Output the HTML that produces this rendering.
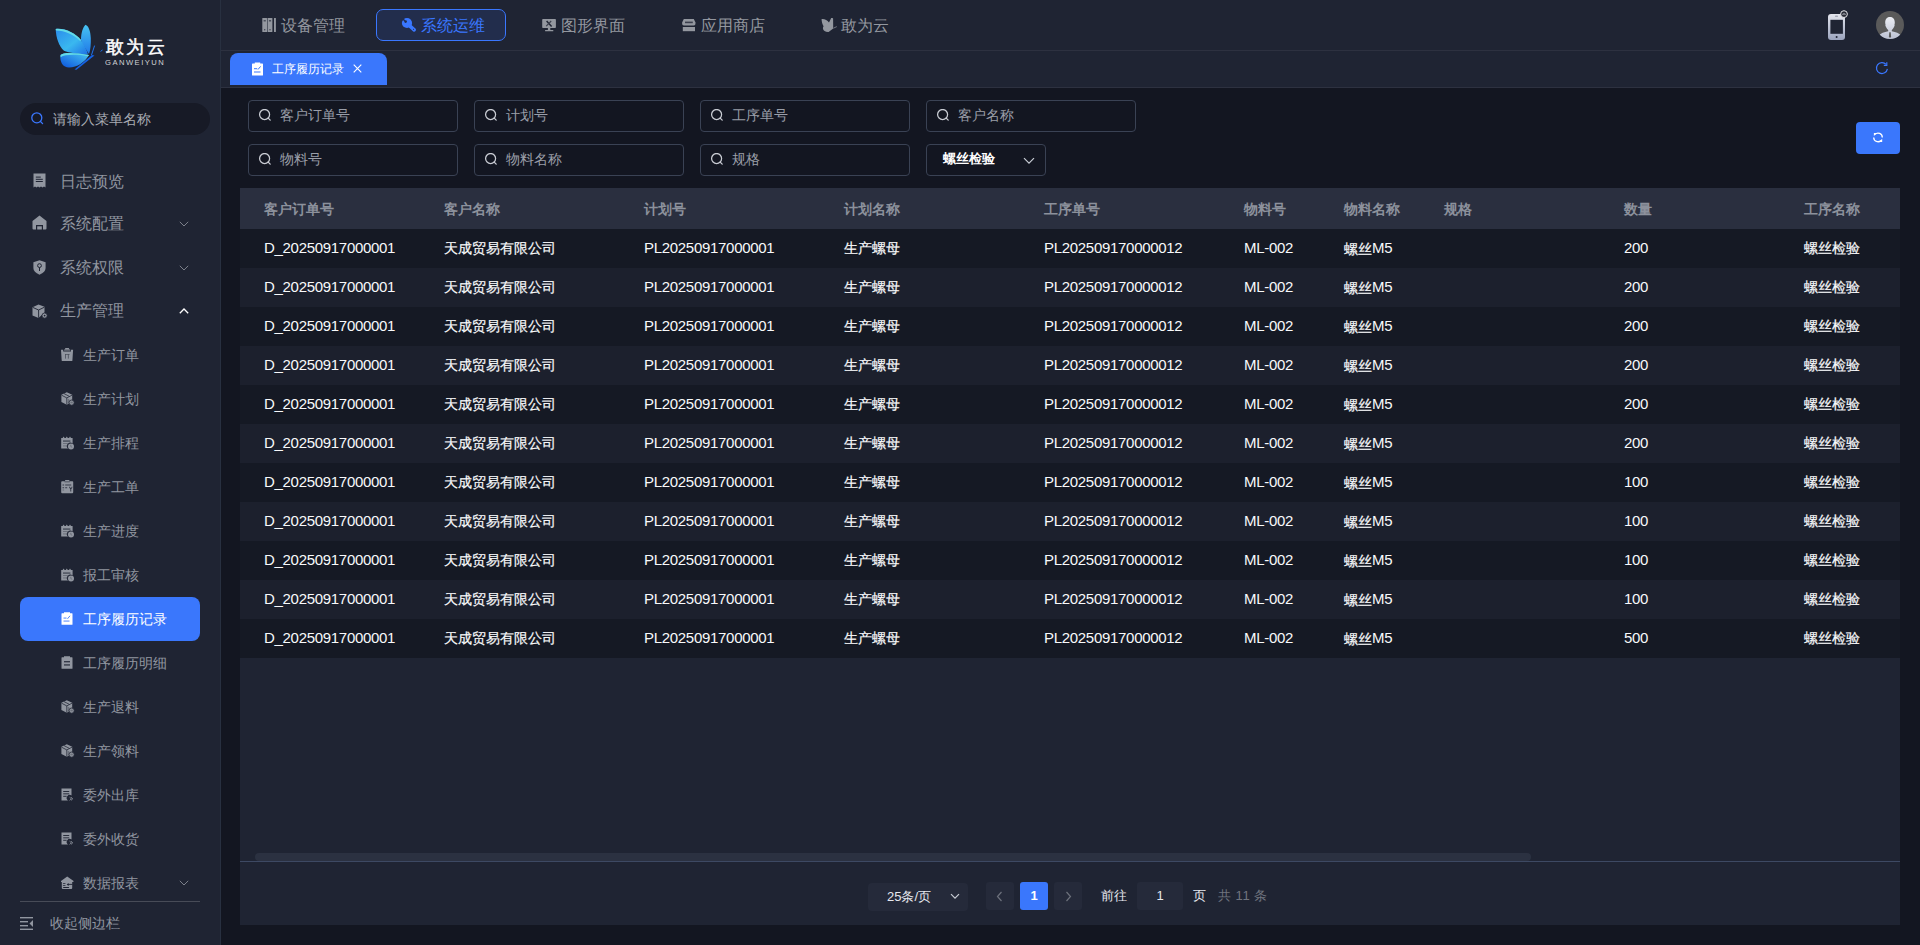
<!DOCTYPE html>
<html><head><meta charset="utf-8"><title>工序履历记录</title>
<style>
*{margin:0;padding:0;box-sizing:border-box}
html,body{width:1920px;height:945px;overflow:hidden}
body{background:#131621;font-family:"Liberation Sans",sans-serif;color:#e6e8ee;position:relative}
.abs{position:absolute}
#side{position:absolute;left:0;top:0;width:221px;height:945px;background:#1f2433;border-right:1px solid #283040}
#hdr{position:absolute;left:221px;top:0;width:1699px;height:51px;background:#1f2433;border-bottom:1px solid #2d3140}
#tabs{position:absolute;left:221px;top:51px;width:1699px;height:37px;background:#1f2433;border-bottom:1px solid #2d3140}
.nav{position:absolute;top:1px;height:50px;line-height:50px;font-size:16px;color:#a3a7b1;white-space:nowrap}
.nav svg{position:absolute}
.navact{position:absolute;left:155px;top:9px;width:130px;height:32px;border:1px solid #3a77ff;border-radius:7px;background:#222d4c}
.logo-t{position:absolute;left:106px;top:37px;font-size:18px;line-height:20px;font-weight:400;-webkit-text-stroke:0.45px #fff;color:#fff;letter-spacing:2.4px;white-space:nowrap}
.logo-s{position:absolute;left:105px;top:57.5px;font-size:7.6px;font-weight:normal;color:#d2d3d6;letter-spacing:1.5px;white-space:nowrap;transform:scaleY(0.95);transform-origin:0 0}
.msearch{position:absolute;left:20px;top:103px;width:190px;height:32px;border-radius:16px;background:#171a26}
.msearch span{position:absolute;left:33px;top:-0.5px;line-height:32px;font-size:14px;color:#a9acb4}
.mi{position:absolute;left:0;width:220px;height:44px;line-height:44px;color:#9196a0;white-space:nowrap}
.mi.top{font-size:16px}
.mi.sub{font-size:14px}
.mi svg{position:absolute}
.mi .txt{position:absolute}
.mi.top .txt{left:60px}
.mi.sub .txt{left:83px}
.mi.active{left:20px;width:180px;background:#3a77fc;border-radius:8px;color:#fff}
.mi.active .txt{left:63px}
.chev{position:absolute;left:179px}
.inp{position:absolute;width:210px;height:32px;border:1px solid #3a4254;border-radius:4px;background:#131621}
.inp span{position:absolute;left:31px;top:-1px;line-height:30px;font-size:14px;color:#9a9ea8}
.inp svg{position:absolute;left:9.5px;top:8px}
#tbl{position:absolute;left:240px;top:188px;width:1660px;height:737px;background:#1f2433;overflow:hidden}
.thead{position:absolute;left:0;top:0;width:1660px;height:41px;background:#2a2f3f}
.thead span{position:absolute;top:1px;line-height:41px;font-size:14px;font-weight:bold;color:#8c919c;white-space:nowrap}
.tr{position:absolute;left:0;width:1660px;height:39px}
.tr.odd{background:#151924}
.tr.even{background:#1c202d}
.tr span{position:absolute;top:0;line-height:39px;font-size:14px;color:#f8f9fb;white-space:nowrap}
.scroll{position:absolute;left:15px;top:665px;width:1276px;height:7.5px;border-radius:4px;background:#2b3141}
.pline{position:absolute;left:0;top:673px;width:1660px;height:1px;background:#3d4963}
.pg{position:absolute;font-size:13px;white-space:nowrap}

.lt{font-size:15px;letter-spacing:-0.3px}
.lt{font-weight:normal}
.lt{position:relative;top:-1px}
.tr span{-webkit-text-stroke:0.2px #f8f9fb}
.tr span .lt{-webkit-text-stroke:0}

</style></head><body>
<div id="side">
  <svg class="abs" style="left:55px;top:24px" width="50" height="47" viewBox="0 0 50 47">
    <defs>
      <linearGradient id="bw1" x1="0" y1="0" x2="1" y2="1"><stop offset="0" stop-color="#2a8cec"/><stop offset="0.55" stop-color="#3ab8ef"/><stop offset="1" stop-color="#1d6fe6"/></linearGradient>
      <linearGradient id="bw1b" x1="0" y1="0" x2="0" y2="1"><stop offset="0" stop-color="#47c3f3"/><stop offset="1" stop-color="#1f78e8"/></linearGradient>
      <linearGradient id="bw2" x1="0" y1="1" x2="1" y2="0"><stop offset="0" stop-color="#0b52dc"/><stop offset="1" stop-color="#48c6f2"/></linearGradient>
    </defs>
    <path d="M26 16 C26 9 28 3 30.6 0.8 C33.5 2 35.5 7 35.8 14 C36 20 35.5 26 34 30 C31 25 27 20 26 16Z" fill="url(#bw1b)"/>
    <path d="M0.7 4.9 C10 4 20 9 26 16 C29 21 32 26 33 30.5 C24 30 14 29 9 26.7 C4 22 1 14 0.7 4.9Z" fill="url(#bw1)"/>
    <path d="M0.7 4.9 C10 4 20 9 26 16 L25.2 17 C19 11 10 6.6 1 6.6Z" fill="#63dbe6"/>
    <path d="M5.5 31 C8 28 20 28.5 34 31 C30 38 22 43.5 14 43.5 C8 43.5 4.5 38 5.5 31Z" fill="url(#bw2)"/>
    <path d="M5.5 31 C8 28 20 28.5 34 31 L33 32.2 C22 30.2 10 30.2 5.6 33.2Z" fill="#63dbe6"/>
    <path d="M19.5 45.5 L37 31 L39.5 31.6 L21.5 45.8Z" fill="#1463e8"/>
    <path d="M36.5 31 L39.6 21.6" stroke="#1e73f0" stroke-width="1"/>
    <path d="M45.5 27.4 L47.5 26" stroke="#1e73f0" stroke-width="1"/>
  </svg>
  <div class="logo-t">敢为云</div>
  <div class="logo-s">GANWEIYUN</div>
  <div class="msearch">
    <svg class="abs" style="left:10.5px;top:9px" width="14" height="14" viewBox="0 0 14 14"><circle cx="5.8" cy="5.8" r="5" fill="none" stroke="#3a77ff" stroke-width="1.3"/><path d="M9.5 9.5 L11.6 11.6" stroke="#3a77ff" stroke-width="1.3" stroke-linecap="round"/></svg>
    <span>请输入菜单名称</span>
  </div>
  <div class="mi top" style="top:160px"><span style="position:absolute;left:33px;top:13px;line-height:0"><svg width="13" height="15" viewBox="0 0 13 15"><path d="M0.5 0.5 H12.5 V14.5 L11 13.4 L9.5 14.5 L8 13.4 L6.5 14.5 L5 13.4 L3.5 14.5 L2 13.4 L0.5 14.5Z" fill="#9196a0"/><rect x="2.8" y="3.6" width="5" height="1" fill="#1f2433"/><rect x="2.8" y="5.8" width="7" height="1" fill="#1f2433"/><rect x="2.8" y="8" width="7" height="1" fill="#1f2433"/></svg></span><span class="txt">日志预览</span></div>
  <div class="mi top" style="top:202px"><span style="position:absolute;left:32px;top:13px;line-height:0"><svg width="15" height="15" viewBox="0 0 15 15"><path d="M7.5 0.5 L14.5 6 L14.5 13.5 Q14.5 14.5 13.5 14.5 L11 14.5 L11 10 L4 10 L4 14.5 L1.5 14.5 Q0.5 14.5 0.5 13.5 L0.5 6Z" fill="#9196a0"/><rect x="5.2" y="11.3" width="4.6" height="3.2" fill="#9196a0"/></svg></span><span class="txt">系统配置</span><svg class="chev" style="top:19px" width="10" height="6" viewBox="0 0 10 6"><path d="M0.8 0.8 L5 5 L9.2 0.8" fill="none" stroke="#7c808b" stroke-width="1"/></svg></div>
  <div class="mi top" style="top:246px"><span style="position:absolute;left:33px;top:14px;line-height:0"><svg width="13" height="15" viewBox="0 0 13 15"><path d="M6.5 0.3 L12.6 2.3 L12.6 8 Q12.6 12 6.5 14.8 Q0.4 12 0.4 8 L0.4 2.3Z" fill="#9196a0"/><circle cx="6.5" cy="5.6" r="1.9" fill="none" stroke="#1f2433" stroke-width="1"/><path d="M6.5 7.5 L6.5 11" stroke="#1f2433" stroke-width="1"/></svg></span><span class="txt">系统权限</span><svg class="chev" style="top:19px" width="10" height="6" viewBox="0 0 10 6"><path d="M0.8 0.8 L5 5 L9.2 0.8" fill="none" stroke="#7c808b" stroke-width="1"/></svg></div>
  <div class="mi top" style="top:289px"><span style="position:absolute;left:32px;top:15px;line-height:0"><svg width="16" height="15" viewBox="0 0 16 15"><path d="M6.5 0.5 L12.5 2.8 L12.5 8.5 L6.5 14 L0.5 11.5 L0.5 3.2Z" fill="#9196a0"/><path d="M0.8 3.4 L6.6 6 L12.4 3.2 M6.6 6 L6.6 13.8" stroke="#1f2433" stroke-width="0.9" fill="none"/><circle cx="12.6" cy="11.6" r="2.6" fill="#9196a0" stroke="#1f2433" stroke-width="0.8"/><circle cx="12.6" cy="11.6" r="0.9" fill="#1f2433"/></svg></span><span class="txt">生产管理</span><svg class="chev" style="top:19px" width="10" height="6" viewBox="0 0 10 6"><path d="M0.8 5.2 L5 1 L9.2 5.2" fill="none" stroke="#ffffff" stroke-width="1.3"/></svg></div>
  <div class="mi sub" style="top:333px"><span style="position:absolute;left:61px;top:15px;line-height:0"><svg width="13" height="14" viewBox="0 0 13 14"><path d="M4.4 0 L7.8 0 L8.4 1.4 L3.8 1.4Z" fill="#9196a0"/><rect x="3" y="1.6" width="6.4" height="1" rx="0.4" fill="#9196a0"/><path d="M0 1.8 L2.2 1.8 L2.2 3.4 L10 3.4 L10 1.8 L12.1 1.8 L11.4 12.4 Q11.3 13 10.7 13 L1.4 13 Q0.8 13 0.7 12.4Z" fill="#9196a0"/><rect x="4" y="6" width="4.6" height="0.7" fill="#4a4f5b"/><rect x="4.1" y="6" width="0.8" height="4.6" fill="#4a4f5b"/><rect x="6.9" y="6" width="0.8" height="4.6" fill="#4a4f5b"/></svg></span><span class="txt">生产订单</span></div>
  <div class="mi sub" style="top:377px"><span style="position:absolute;left:61px;top:15px;line-height:0"><svg width="14" height="14" viewBox="0 0 14 14"><path d="M5.8 0.3 L11.2 2.8 L11.2 9.8 L5.8 12.8 L0.4 10 L0.4 2.8Z" fill="#9196a0"/><path d="M0.6 3.2 L5.8 5.9 L11 3.2 M5.8 5.9 L5.8 12.6 M3 1.6 L8.4 4.4" stroke="#1f2433" stroke-width="0.75" fill="none"/><rect x="6.6" y="7" width="1.6" height="4.6" fill="#6b707b"/><circle cx="10.6" cy="10.6" r="2.6" fill="#9196a0" stroke="#1f2433" stroke-width="0.8"/><rect x="9.4" y="9.6" width="2.4" height="1.8" fill="#6b707b"/></svg></span><span class="txt">生产计划</span></div>
  <div class="mi sub" style="top:421px"><span style="position:absolute;left:61px;top:15px;line-height:0"><svg width="14" height="14" viewBox="0 0 14 14"><path d="M0.2 2 L1.6 2 L2.6 0.4 L3.6 2 L4.8 2 L5.8 0.4 L6.8 2 L8 2 L9 0.4 L10 2 L11.6 2 L11.6 7.6 A3.3 3.3 0 0 0 7 12.6 L0.2 12.6Z" fill="#9196a0"/><rect x="2" y="4.6" width="7.4" height="0.9" fill="#1f2433"/><rect x="2" y="7" width="5.2" height="0.7" fill="#5b606c"/><rect x="2" y="9.6" width="4.4" height="0.7" fill="#5b606c"/><circle cx="10" cy="10.4" r="3" fill="#9196a0"/><path d="M9.8 8.8 L9.8 10.5 L11.2 11.4" stroke="#5b606c" stroke-width="0.7" fill="none"/></svg></span><span class="txt">生产排程</span></div>
  <div class="mi sub" style="top:465px"><span style="position:absolute;left:61px;top:15px;line-height:0"><svg width="13" height="14" viewBox="0 0 13 14"><rect x="0.2" y="1.2" width="12" height="12" rx="0.9" fill="#9196a0"/><rect x="4" y="0" width="4.4" height="2" rx="0.5" fill="#9196a0"/><rect x="3.6" y="1.6" width="5.2" height="0.6" fill="#1f2433"/><rect x="1.5" y="4.6" width="1.6" height="0.8" fill="#1f2433"/><rect x="4.2" y="4.6" width="6" height="0.8" fill="#1f2433"/><rect x="1.5" y="7.4" width="1.6" height="0.8" fill="#1f2433"/><rect x="4.2" y="7.4" width="2" height="0.8" fill="#1f2433"/><rect x="1.5" y="9.6" width="1.6" height="0.8" fill="#5b606c"/><path d="M8.2 6.8 Q8.3 8.6 9.4 8.8 L9.4 11.4 L10.2 11.4 L10.2 8.8 Q11.3 8.6 11.4 6.8 L10.6 6.8 L10.6 7.8 L9 7.8 L9 6.8Z" fill="#1f2433"/></svg></span><span class="txt">生产工单</span></div>
  <div class="mi sub" style="top:509px"><span style="position:absolute;left:61px;top:15px;line-height:0"><svg width="14" height="14" viewBox="0 0 14 14"><path d="M0.2 2 L1.6 2 L2.6 0.4 L3.6 2 L4.8 2 L5.8 0.4 L6.8 2 L8 2 L9 0.4 L10 2 L11.6 2 L11.6 7.6 A3.3 3.3 0 0 0 7 12.6 L0.2 12.6Z" fill="#9196a0"/><rect x="2" y="4.6" width="7.4" height="0.9" fill="#1f2433"/><rect x="2" y="7" width="5.2" height="0.7" fill="#5b606c"/><rect x="2" y="9.6" width="4.4" height="0.7" fill="#5b606c"/><circle cx="10" cy="10.4" r="3" fill="#9196a0"/><path d="M9.8 8.8 L9.8 10.5 L11.2 11.4" stroke="#5b606c" stroke-width="0.7" fill="none"/></svg></span><span class="txt">生产进度</span></div>
  <div class="mi sub" style="top:553px"><span style="position:absolute;left:61px;top:15px;line-height:0"><svg width="14" height="14" viewBox="0 0 14 14"><path d="M0.2 2 L1.6 2 L2.6 0.4 L3.6 2 L4.8 2 L5.8 0.4 L6.8 2 L8 2 L9 0.4 L10 2 L11.6 2 L11.6 7.6 A3.3 3.3 0 0 0 7 12.6 L0.2 12.6Z" fill="#9196a0"/><rect x="2" y="4.6" width="7.4" height="0.9" fill="#1f2433"/><rect x="2" y="7" width="5.2" height="0.7" fill="#5b606c"/><rect x="2" y="9.6" width="4.4" height="0.7" fill="#5b606c"/><circle cx="10" cy="10.4" r="3" fill="#9196a0"/><path d="M9.8 8.8 L9.8 10.5 L11.2 11.4" stroke="#5b606c" stroke-width="0.7" fill="none"/></svg></span><span class="txt">报工审核</span></div>
  <div class="mi sub active" style="top:597px"><span style="position:absolute;left:41px;top:15px;line-height:0"><svg width="12" height="13" viewBox="0 0 12 13"><path d="M0.5 1.8 Q0.5 1.3 1 1.3 L3 1.3 L3 0.3 L9 0.3 L9 1.3 L11 1.3 Q11.5 1.3 11.5 1.8 L11.5 12.3 Q11.5 12.8 11 12.8 L1 12.8 Q0.5 12.8 0.5 12.3Z" fill="#fff"/><rect x="2.5" y="5.6" width="3" height="0.9" fill="#3a77fc"/><rect x="2.5" y="8.6" width="6" height="0.9" fill="#3a77fc"/><path d="M6.5 6.8 L9 3.8" stroke="#3a77fc" stroke-width="0.9"/></svg></span><span class="txt">工序履历记录</span></div>
  <div class="mi sub" style="top:641px"><span style="position:absolute;left:61px;top:15px;line-height:0"><svg width="12" height="13" viewBox="0 0 12 13"><path d="M0.5 1.8 Q0.5 1.3 1 1.3 L3 1.3 L3 0.3 L9 0.3 L9 1.3 L11 1.3 Q11.5 1.3 11.5 1.8 L11.5 12.3 Q11.5 12.8 11 12.8 L1 12.8 Q0.5 12.8 0.5 12.3Z" fill="#9196a0"/><rect x="3" y="5.2" width="6" height="1.1" fill="#1f2433"/><rect x="3" y="8.4" width="6" height="1.1" fill="#1f2433"/></svg></span><span class="txt">工序履历明细</span></div>
  <div class="mi sub" style="top:685px"><span style="position:absolute;left:61px;top:15px;line-height:0"><svg width="14" height="14" viewBox="0 0 14 14"><path d="M5.8 0.3 L11.2 2.8 L11.2 9.8 L5.8 12.8 L0.4 10 L0.4 2.8Z" fill="#9196a0"/><path d="M0.6 3.2 L5.8 5.9 L11 3.2 M5.8 5.9 L5.8 12.6 M3 1.6 L8.4 4.4" stroke="#1f2433" stroke-width="0.75" fill="none"/><rect x="6.6" y="7" width="1.6" height="4.6" fill="#6b707b"/><circle cx="10.6" cy="10.6" r="2.6" fill="#9196a0" stroke="#1f2433" stroke-width="0.8"/><rect x="9.4" y="9.6" width="2.4" height="1.8" fill="#6b707b"/></svg></span><span class="txt">生产退料</span></div>
  <div class="mi sub" style="top:729px"><span style="position:absolute;left:61px;top:15px;line-height:0"><svg width="14" height="14" viewBox="0 0 14 14"><path d="M5.8 0.3 L11.2 2.8 L11.2 9.8 L5.8 12.8 L0.4 10 L0.4 2.8Z" fill="#9196a0"/><path d="M0.6 3.2 L5.8 5.9 L11 3.2 M5.8 5.9 L5.8 12.6 M3 1.6 L8.4 4.4" stroke="#1f2433" stroke-width="0.75" fill="none"/><rect x="6.6" y="7" width="1.6" height="4.6" fill="#6b707b"/><circle cx="10.6" cy="10.6" r="2.6" fill="#9196a0" stroke="#1f2433" stroke-width="0.8"/><rect x="9.4" y="9.6" width="2.4" height="1.8" fill="#6b707b"/></svg></span><span class="txt">生产领料</span></div>
  <div class="mi sub" style="top:773px"><span style="position:absolute;left:61px;top:15px;line-height:0"><svg width="12" height="13" viewBox="0 0 12 13"><path d="M0.5 0.5 H10.5 V7.5 A3 3 0 0 0 7 12.5 H0.5Z" fill="#9196a0"/><rect x="2.2" y="3" width="6" height="0.9" fill="#1f2433"/><rect x="2.2" y="5.4" width="6" height="0.9" fill="#1f2433"/><rect x="2.2" y="7.8" width="3.5" height="0.9" fill="#1f2433"/><path d="M8.6 9.2 L10.4 10.8 L8.6 12.4 M10 9.2 L11.8 10.8 L10 12.4" stroke="#9196a0" stroke-width="0.8" fill="none"/></svg></span><span class="txt">委外出库</span></div>
  <div class="mi sub" style="top:817px"><span style="position:absolute;left:61px;top:15px;line-height:0"><svg width="12" height="13" viewBox="0 0 12 13"><path d="M0.5 0.5 H10.5 V7.5 A3 3 0 0 0 7 12.5 H0.5Z" fill="#9196a0"/><rect x="2.2" y="3" width="6" height="0.9" fill="#1f2433"/><rect x="2.2" y="5.4" width="6" height="0.9" fill="#1f2433"/><rect x="2.2" y="7.8" width="3.5" height="0.9" fill="#1f2433"/><path d="M8.6 9.2 L10.4 10.8 L8.6 12.4 M10 9.2 L11.8 10.8 L10 12.4" stroke="#9196a0" stroke-width="0.8" fill="none"/></svg></span><span class="txt">委外收货</span></div>
  <div class="mi sub" style="top:861px"><span style="position:absolute;left:61px;top:15px;line-height:0"><svg width="14" height="14" viewBox="0 0 14 14"><path d="M6.2 0.4 L12.6 5 Q12.8 6 12 6 L11.2 6 L11.2 12 Q11.2 13 10.2 13 L1.8 13 Q0.8 13 0.8 12 L0.8 6 L0.2 6 Q-0.4 6 0 5Z" fill="#9196a0"/><rect x="1.8" y="6.9" width="2.8" height="0.8" rx="0.4" fill="#1f2433"/><rect x="1.8" y="9" width="2.8" height="0.8" rx="0.4" fill="#1f2433"/><rect x="2" y="11" width="6.2" height="0.9" rx="0.45" fill="#1f2433"/><path d="M7 8.4 L11.6 8.4" stroke="#1f2433" stroke-width="0.9"/><path d="M5.7 8.4 L7.6 6.9 L7.6 9.9Z" fill="#1f2433"/></svg></span><span class="txt">数据报表</span><svg class="chev" style="top:19px" width="10" height="6" viewBox="0 0 10 6"><path d="M0.8 0.8 L5 5 L9.2 0.8" fill="none" stroke="#7c808b" stroke-width="1"/></svg></div>
  <div class="abs" style="left:20px;top:901px;width:180px;height:1px;background:#474b57"></div>
  <svg class="abs" style="left:20px;top:917px" width="14" height="13" viewBox="0 0 14 13" fill="#9196a0"><rect x="0" y="0" width="13" height="1.4"/><rect x="0" y="4" width="8" height="1.4"/><rect x="0" y="8" width="8" height="1.4"/><rect x="0" y="11.6" width="13" height="1.4"/><path d="M13 3 L9.5 6.5 L13 10 Z"/></svg>
  <div class="abs" style="left:50px;top:913px;font-size:14px;line-height:20px;color:#9196a0">收起侧边栏</div>
</div>

<div id="hdr">
  <div class="navact"></div>
  <span class="abs" style="left:41px;top:18px;line-height:0"><svg width="15" height="14" viewBox="0 0 15 14"><rect x="0.3" y="0" width="4.8" height="14" rx="0.6" fill="#93979f"/><rect x="5.6" y="0" width="4.8" height="14" rx="0.6" fill="#93979f"/><rect x="12" y="0" width="1.9" height="14" rx="0.3" fill="#93979f"/><rect x="1.6" y="2.2" width="2.2" height="1.2" fill="#3b3f4d"/><rect x="6.9" y="2.2" width="2.2" height="1.2" fill="#3b3f4d"/><circle cx="2.7" cy="11.8" r="0.7" fill="#3b3f4d"/><circle cx="8" cy="11.8" r="0.7" fill="#3b3f4d"/></svg></span><span class="nav" style="left:60px;color:#93979f">设备管理</span>
  <span class="abs" style="left:180px;top:17px;line-height:0"><svg width="16" height="16" viewBox="0 0 16 16"><circle cx="6" cy="6" r="5.1" fill="#3a77ff"/><path d="M4.9 4.9 L0.3 2.2 L2.2 0.3Z" fill="#222d4c"/><circle cx="4.6" cy="4.6" r="1.3" fill="#222d4c"/><path d="M9.3 9.3 L13.2 12.8" stroke="#3a77ff" stroke-width="3.6" stroke-linecap="round"/><circle cx="12.5" cy="12.2" r="0.55" fill="#222d4c"/></svg></span><span class="nav" style="left:200px;color:#3a77ff">系统运维</span>
  <span class="abs" style="left:321px;top:18px;line-height:0"><svg width="15" height="15" viewBox="0 0 15 15"><rect x="0.2" y="0.9" width="13.7" height="9.2" rx="0.8" fill="#93979f"/><rect x="5.9" y="10" width="2.4" height="2.2" fill="#93979f"/><rect x="3" y="12.1" width="8.4" height="1.1" rx="0.5" fill="#93979f"/><path d="M4.6 3 L9.6 8.4" stroke="#1f2433" stroke-width="1.5"/><path d="M9.2 3 L4.2 8.2" stroke="#3b3f4d" stroke-width="1.1"/></svg></span><span class="nav" style="left:340px;color:#93979f">图形界面</span>
  <span class="abs" style="left:461px;top:18px;line-height:0"><svg width="15" height="15" viewBox="0 0 15 15"><path d="M1.8 0.9 H11.8 L13.6 4.8 Q13.6 7.6 11.8 7.6 H1.8 Q0 7.6 0 4.8Z" fill="#93979f"/><rect x="3" y="3.6" width="7.8" height="1.6" fill="#3b3f4d"/><rect x="0.8" y="9" width="12.2" height="4.2" fill="#93979f"/></svg></span><span class="nav" style="left:480px;color:#93979f">应用商店</span>
  <span class="abs" style="left:600px;top:17px;line-height:0"><svg width="17" height="16" viewBox="0 0 17 16"><path d="M0.6 2 C3.5 1.6 6.2 3 8 5.6 L10.2 1 C10.8 0.9 11.6 1 12.1 1.4 L12.2 11.6 L7.6 15 C4.6 15.2 2.2 13.8 2 11.8 C1.8 10.4 2.2 9.6 2.6 9.2 C1.2 7.2 0.6 4.4 0.6 2Z" fill="#93979f"/><path d="M12.4 11.2 L15.8 9.6" stroke="#93979f" stroke-width="0.7"/></svg></span><span class="nav" style="left:620px;color:#93979f">敢为云</span>
  <!-- phone -->
  <svg class="abs" style="left:1605px;top:9px" width="24" height="32" viewBox="0 0 24 32">
    <defs><linearGradient id="ph" x1="0" y1="0" x2="0" y2="1"><stop offset="0" stop-color="#e4e6ee"/><stop offset="1" stop-color="#9aa3bd"/></linearGradient></defs>
    <rect x="2" y="5" width="17" height="26" rx="3" fill="url(#ph)"/>
    <rect x="4.4" y="10.8" width="12.5" height="14" fill="#1f2433"/>
    <circle cx="10.6" cy="27.9" r="1" fill="#1f2433"/>
    <rect x="9" y="6.8" width="3" height="0.8" rx="0.4" fill="#6a7080"/>
    <circle cx="18" cy="5.1" r="3.4" fill="#2a2d38" stroke="#e6e6ea" stroke-width="1"/>
    <path d="M16.1 5.2 Q18 3.3 19.9 5.2 Q18 7 16.1 5.2Z" fill="#c9cbd2"/><circle cx="18" cy="5.2" r="0.7" fill="#2a2d38"/>
  </svg>
  <!-- avatar -->
  <svg class="abs" style="left:1654px;top:11px" width="30" height="30" viewBox="0 0 30 30">
    <defs><linearGradient id="av" x1="0" y1="0" x2="0" y2="1"><stop offset="0" stop-color="#eceef4"/><stop offset="1" stop-color="#b7bdd0"/></linearGradient>
    <clipPath id="avc"><circle cx="15" cy="14" r="14"/></clipPath></defs>
    <circle cx="15" cy="14" r="14" fill="#5a5a5a"/>
    <g clip-path="url(#avc)">
      <path d="M15 6 C11.5 6 10.2 8.5 10.2 11.5 C10.2 12.5 10.4 13.5 10.6 14 C10.2 14.2 10.3 15.2 10.8 15.6 C11.5 17.5 12.6 18.5 13.2 19 L13.2 20.3 C9 21 6 22.5 3.8 24.5 L3.8 30 L26.2 30 L26.2 24.5 C24 22.5 21 21 16.8 20.3 L16.8 19 C17.4 18.5 18.5 17.5 19.2 15.6 C19.7 15.2 19.8 14.2 19.4 14 C19.6 13.5 19.8 12.5 19.8 11.5 C19.8 8.5 18.5 6 15 6Z" fill="url(#av)"/>
      <path d="M14.3 21.2 L15.7 21.2 L16.1 25.8 L15 27 L13.9 25.8Z" fill="#5a5a5a"/>
    </g>
  </svg>
</div>

<div id="tabs">
  <div class="abs" style="left:9px;top:2px;width:157px;height:32px;background:#3a77fc;border-radius:8px 8px 0 0"></div>
  <svg class="abs" style="left:30px;top:11px" width="13" height="14" viewBox="0 0 13 14"><path d="M1 2.2 Q1 1.6 1.6 1.6 L3.8 1.6 L3.8 0.6 L9.2 0.6 L9.2 1.6 L11.4 1.6 Q12 1.6 12 2.2 L12 13 Q12 13.6 11.4 13.6 L1.6 13.6 Q1 13.6 1 13 Z" fill="#fff"/><rect x="3" y="6.2" width="3.2" height="1" fill="#3a77fc"/><rect x="3" y="9.5" width="6.5" height="1" fill="#3a77fc"/><path d="M7 7.5 L9.6 4.4" stroke="#3a77fc" stroke-width="1"/></svg>
  <div class="abs" style="left:51px;top:0;line-height:36px;font-size:12px;color:#fff">工序履历记录</div>
  <svg class="abs" style="left:132px;top:13px" width="9" height="9" viewBox="0 0 9 9"><path d="M0.7 0.7 L8.3 8.3 M8.3 0.7 L0.7 8.3" stroke="#fff" stroke-width="1.1"/></svg>
  <svg class="abs" style="left:1654px;top:10px" width="14" height="14" viewBox="0 0 14 14"><path d="M11.1 3.4 A5.5 5.5 0 1 0 12.4 7.9" fill="none" stroke="#3a77ff" stroke-width="1.2"/><path d="M11.8 1.2 L11.8 4.4 L8.8 4.4" fill="none" stroke="#3a77ff" stroke-width="1.2"/></svg>
</div>

<div class="inp" style="left:248px;top:100px"><svg width="14" height="14" viewBox="0 0 14 14"><circle cx="5.6" cy="5.5" r="5" fill="none" stroke="#c9ccd3" stroke-width="1.25"/><path d="M9.2 9.1 L11.2 11.1" stroke="#c9ccd3" stroke-width="1.3" stroke-linecap="round"/></svg><span>客户订单号</span></div>
<div class="inp" style="left:474px;top:100px"><svg width="14" height="14" viewBox="0 0 14 14"><circle cx="5.6" cy="5.5" r="5" fill="none" stroke="#c9ccd3" stroke-width="1.25"/><path d="M9.2 9.1 L11.2 11.1" stroke="#c9ccd3" stroke-width="1.3" stroke-linecap="round"/></svg><span>计划号</span></div>
<div class="inp" style="left:700px;top:100px"><svg width="14" height="14" viewBox="0 0 14 14"><circle cx="5.6" cy="5.5" r="5" fill="none" stroke="#c9ccd3" stroke-width="1.25"/><path d="M9.2 9.1 L11.2 11.1" stroke="#c9ccd3" stroke-width="1.3" stroke-linecap="round"/></svg><span>工序单号</span></div>
<div class="inp" style="left:926px;top:100px"><svg width="14" height="14" viewBox="0 0 14 14"><circle cx="5.6" cy="5.5" r="5" fill="none" stroke="#c9ccd3" stroke-width="1.25"/><path d="M9.2 9.1 L11.2 11.1" stroke="#c9ccd3" stroke-width="1.3" stroke-linecap="round"/></svg><span>客户名称</span></div>
<div class="inp" style="left:248px;top:144px"><svg width="14" height="14" viewBox="0 0 14 14"><circle cx="5.6" cy="5.5" r="5" fill="none" stroke="#c9ccd3" stroke-width="1.25"/><path d="M9.2 9.1 L11.2 11.1" stroke="#c9ccd3" stroke-width="1.3" stroke-linecap="round"/></svg><span>物料号</span></div>
<div class="inp" style="left:474px;top:144px"><svg width="14" height="14" viewBox="0 0 14 14"><circle cx="5.6" cy="5.5" r="5" fill="none" stroke="#c9ccd3" stroke-width="1.25"/><path d="M9.2 9.1 L11.2 11.1" stroke="#c9ccd3" stroke-width="1.3" stroke-linecap="round"/></svg><span>物料名称</span></div>
<div class="inp" style="left:700px;top:144px"><svg width="14" height="14" viewBox="0 0 14 14"><circle cx="5.6" cy="5.5" r="5" fill="none" stroke="#c9ccd3" stroke-width="1.25"/><path d="M9.2 9.1 L11.2 11.1" stroke="#c9ccd3" stroke-width="1.3" stroke-linecap="round"/></svg><span>规格</span></div>
<div class="inp" style="left:926px;top:144px;width:120px"><span style="left:16px;color:#fff;font-weight:bold;font-size:13px">螺丝检验</span><svg style="position:absolute;left:96px;top:12px" width="12" height="8" viewBox="0 0 12 8"><path d="M1 1.2 L6 6.2 L11 1.2" fill="none" stroke="#c8ccd4" stroke-width="1.2"/></svg></div>

<div class="abs" style="left:1856px;top:122px;width:44px;height:32px;background:#3a77fc;border-radius:4px">
  <svg class="abs" style="left:16px;top:9px" width="12" height="12" viewBox="0 0 12 12"><path d="M2.96 3.36 A4.3 4.3 0 0 1 10.3 6.4" fill="none" stroke="#fff" stroke-width="1.3"/><path d="M1.7 6.4 A4.3 4.3 0 0 0 9.04 9.44" fill="none" stroke="#fff" stroke-width="1.3"/><path d="M1.9 1.9 L5.1 1.9 L1.9 5.1Z" fill="#fff"/><path d="M10.2 10.9 L7 10.9 L10.2 7.7Z" fill="#fff"/></svg>
</div>

<div id="tbl">
<div class="thead"><span style="left:24px">客户订单号</span><span style="left:204px">客户名称</span><span style="left:404px">计划号</span><span style="left:604px">计划名称</span><span style="left:804px">工序单号</span><span style="left:1004px">物料号</span><span style="left:1104px">物料名称</span><span style="left:1204px">规格</span><span style="left:1384px">数量</span><span style="left:1564px">工序名称</span></div>
<div class="tr odd" style="top:41px"><span class="c0" style="left:24px"><b class=lt>D_20250917000001</b></span><span class="c1" style="left:204px">天成贸易有限公司</span><span class="c2" style="left:404px"><b class=lt>PL20250917000001</b></span><span class="c3" style="left:604px">生产螺母</span><span class="c4" style="left:804px"><b class=lt>PL202509170000012</b></span><span class="c5" style="left:1004px"><b class=lt>ML-002</b></span><span class="c6" style="left:1104px">螺丝<b class=lt>M5</b></span><span class="c8" style="left:1384px"><b class=lt>200</b></span><span class="c9" style="left:1564px">螺丝检验</span></div>
<div class="tr even" style="top:80px"><span class="c0" style="left:24px"><b class=lt>D_20250917000001</b></span><span class="c1" style="left:204px">天成贸易有限公司</span><span class="c2" style="left:404px"><b class=lt>PL20250917000001</b></span><span class="c3" style="left:604px">生产螺母</span><span class="c4" style="left:804px"><b class=lt>PL202509170000012</b></span><span class="c5" style="left:1004px"><b class=lt>ML-002</b></span><span class="c6" style="left:1104px">螺丝<b class=lt>M5</b></span><span class="c8" style="left:1384px"><b class=lt>200</b></span><span class="c9" style="left:1564px">螺丝检验</span></div>
<div class="tr odd" style="top:119px"><span class="c0" style="left:24px"><b class=lt>D_20250917000001</b></span><span class="c1" style="left:204px">天成贸易有限公司</span><span class="c2" style="left:404px"><b class=lt>PL20250917000001</b></span><span class="c3" style="left:604px">生产螺母</span><span class="c4" style="left:804px"><b class=lt>PL202509170000012</b></span><span class="c5" style="left:1004px"><b class=lt>ML-002</b></span><span class="c6" style="left:1104px">螺丝<b class=lt>M5</b></span><span class="c8" style="left:1384px"><b class=lt>200</b></span><span class="c9" style="left:1564px">螺丝检验</span></div>
<div class="tr even" style="top:158px"><span class="c0" style="left:24px"><b class=lt>D_20250917000001</b></span><span class="c1" style="left:204px">天成贸易有限公司</span><span class="c2" style="left:404px"><b class=lt>PL20250917000001</b></span><span class="c3" style="left:604px">生产螺母</span><span class="c4" style="left:804px"><b class=lt>PL202509170000012</b></span><span class="c5" style="left:1004px"><b class=lt>ML-002</b></span><span class="c6" style="left:1104px">螺丝<b class=lt>M5</b></span><span class="c8" style="left:1384px"><b class=lt>200</b></span><span class="c9" style="left:1564px">螺丝检验</span></div>
<div class="tr odd" style="top:197px"><span class="c0" style="left:24px"><b class=lt>D_20250917000001</b></span><span class="c1" style="left:204px">天成贸易有限公司</span><span class="c2" style="left:404px"><b class=lt>PL20250917000001</b></span><span class="c3" style="left:604px">生产螺母</span><span class="c4" style="left:804px"><b class=lt>PL202509170000012</b></span><span class="c5" style="left:1004px"><b class=lt>ML-002</b></span><span class="c6" style="left:1104px">螺丝<b class=lt>M5</b></span><span class="c8" style="left:1384px"><b class=lt>200</b></span><span class="c9" style="left:1564px">螺丝检验</span></div>
<div class="tr even" style="top:236px"><span class="c0" style="left:24px"><b class=lt>D_20250917000001</b></span><span class="c1" style="left:204px">天成贸易有限公司</span><span class="c2" style="left:404px"><b class=lt>PL20250917000001</b></span><span class="c3" style="left:604px">生产螺母</span><span class="c4" style="left:804px"><b class=lt>PL202509170000012</b></span><span class="c5" style="left:1004px"><b class=lt>ML-002</b></span><span class="c6" style="left:1104px">螺丝<b class=lt>M5</b></span><span class="c8" style="left:1384px"><b class=lt>200</b></span><span class="c9" style="left:1564px">螺丝检验</span></div>
<div class="tr odd" style="top:275px"><span class="c0" style="left:24px"><b class=lt>D_20250917000001</b></span><span class="c1" style="left:204px">天成贸易有限公司</span><span class="c2" style="left:404px"><b class=lt>PL20250917000001</b></span><span class="c3" style="left:604px">生产螺母</span><span class="c4" style="left:804px"><b class=lt>PL202509170000012</b></span><span class="c5" style="left:1004px"><b class=lt>ML-002</b></span><span class="c6" style="left:1104px">螺丝<b class=lt>M5</b></span><span class="c8" style="left:1384px"><b class=lt>100</b></span><span class="c9" style="left:1564px">螺丝检验</span></div>
<div class="tr even" style="top:314px"><span class="c0" style="left:24px"><b class=lt>D_20250917000001</b></span><span class="c1" style="left:204px">天成贸易有限公司</span><span class="c2" style="left:404px"><b class=lt>PL20250917000001</b></span><span class="c3" style="left:604px">生产螺母</span><span class="c4" style="left:804px"><b class=lt>PL202509170000012</b></span><span class="c5" style="left:1004px"><b class=lt>ML-002</b></span><span class="c6" style="left:1104px">螺丝<b class=lt>M5</b></span><span class="c8" style="left:1384px"><b class=lt>100</b></span><span class="c9" style="left:1564px">螺丝检验</span></div>
<div class="tr odd" style="top:353px"><span class="c0" style="left:24px"><b class=lt>D_20250917000001</b></span><span class="c1" style="left:204px">天成贸易有限公司</span><span class="c2" style="left:404px"><b class=lt>PL20250917000001</b></span><span class="c3" style="left:604px">生产螺母</span><span class="c4" style="left:804px"><b class=lt>PL202509170000012</b></span><span class="c5" style="left:1004px"><b class=lt>ML-002</b></span><span class="c6" style="left:1104px">螺丝<b class=lt>M5</b></span><span class="c8" style="left:1384px"><b class=lt>100</b></span><span class="c9" style="left:1564px">螺丝检验</span></div>
<div class="tr even" style="top:392px"><span class="c0" style="left:24px"><b class=lt>D_20250917000001</b></span><span class="c1" style="left:204px">天成贸易有限公司</span><span class="c2" style="left:404px"><b class=lt>PL20250917000001</b></span><span class="c3" style="left:604px">生产螺母</span><span class="c4" style="left:804px"><b class=lt>PL202509170000012</b></span><span class="c5" style="left:1004px"><b class=lt>ML-002</b></span><span class="c6" style="left:1104px">螺丝<b class=lt>M5</b></span><span class="c8" style="left:1384px"><b class=lt>100</b></span><span class="c9" style="left:1564px">螺丝检验</span></div>
<div class="tr odd" style="top:431px"><span class="c0" style="left:24px"><b class=lt>D_20250917000001</b></span><span class="c1" style="left:204px">天成贸易有限公司</span><span class="c2" style="left:404px"><b class=lt>PL20250917000001</b></span><span class="c3" style="left:604px">生产螺母</span><span class="c4" style="left:804px"><b class=lt>PL202509170000012</b></span><span class="c5" style="left:1004px"><b class=lt>ML-002</b></span><span class="c6" style="left:1104px">螺丝<b class=lt>M5</b></span><span class="c8" style="left:1384px"><b class=lt>500</b></span><span class="c9" style="left:1564px">螺丝检验</span></div>
<div class="scroll"></div>
<div class="pline"></div>
<!-- pagination -->
<div class="abs" style="left:628px;top:695px;width:100px;height:28px;background:#252a3a;border-radius:4px">
  <span class="abs" style="left:19px;top:0;line-height:28px;font-size:13px;color:#e6e8ee">25条/页</span>
  <svg class="abs" style="left:82px;top:10px" width="10" height="7" viewBox="0 0 10 7"><path d="M1 1.2 L5 5.2 L9 1.2" fill="none" stroke="#c8ccd4" stroke-width="1.2"/></svg>
</div>
<div class="abs" style="left:746px;top:694px;width:28px;height:28px;background:#252a3a;border-radius:3px">
  <svg class="abs" style="left:10px;top:9px" width="7" height="11" viewBox="0 0 7 11"><path d="M5.5 1 L1.5 5.5 L5.5 10" fill="none" stroke="#6d717c" stroke-width="1.2"/></svg>
</div>
<div class="abs" style="left:780px;top:694px;width:28px;height:28px;background:#3a77fc;border-radius:3px;color:#fff;font-size:13px;font-weight:bold;line-height:28px;text-align:center">1</div>
<div class="abs" style="left:814px;top:694px;width:28px;height:28px;background:#252a3a;border-radius:3px">
  <svg class="abs" style="left:11px;top:9px" width="7" height="11" viewBox="0 0 7 11"><path d="M1.5 1 L5.5 5.5 L1.5 10" fill="none" stroke="#6d717c" stroke-width="1.2"/></svg>
</div>
<span class="abs" style="left:861px;top:694px;line-height:28px;font-size:13px;color:#e6e8ee">前往</span>
<div class="abs" style="left:897px;top:694px;width:46px;height:28px;background:#252a3a;border-radius:3px;color:#e6e8ee;font-size:13px;line-height:28px;text-align:center">1</div>
<span class="abs" style="left:953px;top:694px;line-height:28px;font-size:13px;color:#e6e8ee">页</span>
<span class="abs" style="left:978px;top:694px;line-height:28px;font-size:13px;color:#70747f;letter-spacing:0.5px">共 11 条</span>
</div>

</body></html>
